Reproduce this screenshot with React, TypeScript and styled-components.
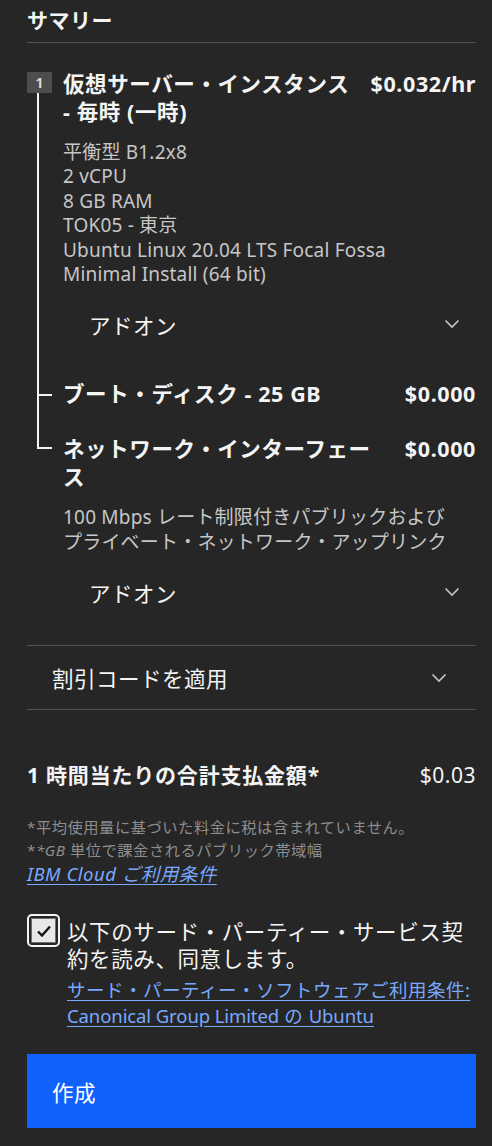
import * as React from 'react'
import styled, { createGlobalStyle } from 'styled-components'

const GlobalStyle = createGlobalStyle`
  html, body {
    margin: 0;
    padding: 0;
    background: #262626;
  }
  body {
    font-family: "Noto Sans", "Noto Sans CJK JP", sans-serif;
    color: #f4f4f4;
    letter-spacing: 0.5px;
  }
`

const Panel = styled.div`
  width: 492px;
  min-height: 1146px;
  box-sizing: border-box;
  padding: 6px 16px 0 27px;
  background: #262626;
`

const Heading = styled.h2`
  margin: 0;
  font-size: 21px;
  font-weight: 700;
  line-height: 28px;
  padding-bottom: 8px;
  border-bottom: 1px solid #525252;
`

const Tree = styled.div`
  margin-top: 27px;
  margin-bottom: 29px;
`

const Item = styled.div`
  display: grid;
  grid-template-columns: 36px 1fr;
`

const Gutter = styled.div`
  display: flex;
  flex-direction: column;
`

const Badge = styled.div`
  width: 25px;
  height: 21px;
  margin-top: 2px;
  background: #4d4d4d;
  color: #e0e0e0;
  font-size: 15px;
  font-weight: 600;
  line-height: 21px;
  text-align: center;
  letter-spacing: 0;
`

const Stem = styled.div`
  flex: 1;
  margin-left: 10px;
  border-left: 2px solid #f4f4f4;
`

// 上: 縦線 (最後の項目は └ の角)
const StemTop = styled.div<{ $corner?: boolean }>`
  height: 14px;
  margin-left: 10px;
  border-left: 2px solid #f4f4f4;
  width: 13px;
  border-bottom: ${(p) => (p.$corner ? '2px solid #f4f4f4' : 'none')};
`

// 下: 枝と続きの縦線
const StemBranch = styled.div<{ $end?: boolean }>`
  flex: 1;
  margin-left: 10px;
  width: 13px;
  border-left: ${(p) => (p.$end ? 'none' : '2px solid #f4f4f4')};
  border-top: ${(p) => (p.$end ? 'none' : '2px solid #f4f4f4')};
`

const Body = styled.div<{ $gap?: number }>`
  padding-top: ${(p) => p.$gap || 0}px;
`

const TitleRow = styled.div`
  display: flex;
  justify-content: space-between;
  gap: 16px;
  font-size: 21.5px;
  font-weight: 700;
  line-height: 28px;
  letter-spacing: 0.6px;
`

const Title = styled.div`
  flex: 1;
`

const Price = styled.div`
  white-space: nowrap;
`

const Details = styled.div`
  margin-top: 14px;
  font-size: 19px;
  line-height: 24.4px;
  letter-spacing: 0.2px;
  color: #c6c6c6;
`

const AddonRow = styled.div`
  display: flex;
  align-items: center;
  justify-content: space-between;
  height: 48px;
  margin-top: 14px;
  padding: 0 16px 0 26px;
  font-size: 21.5px;
`

const Chevron: React.FC = () => (
  <svg width="16" height="10" viewBox="0 0 16 10">
    <path d="M1.5 1.5 L8 8 L14.5 1.5" fill="none" stroke="#c6c6c6" strokeWidth="1.6" />
  </svg>
)

const Discount = styled.div`
  display: flex;
  align-items: center;
  justify-content: space-between;
  height: 63px;
  padding: 0 29px 0 25px;
  border-top: 1px solid #525252;
  border-bottom: 1px solid #525252;
  font-size: 21.5px;
`

const TotalRow = styled.div`
  display: flex;
  justify-content: space-between;
  margin-top: 51px;
  font-size: 21px;
  line-height: 28px;
`

const TotalLabel = styled.div`
  font-weight: 700;
  letter-spacing: 0.8px;
`

const Notes = styled.div`
  margin-top: 27px;
  font-size: 15.3px;
  line-height: 23px;
  color: #8d8d8d;

  em {
    font-style: italic;
  }
`

const Link = styled.a<{ $italic?: boolean }>`
  display: block;
  color: #78a9ff;
  text-decoration: underline;
  text-underline-offset: 3px;
  font-style: ${(p) => (p.$italic ? 'italic' : 'normal')};
  font-size: 18.5px;
  line-height: 24px;
`

const Latin = styled.span`
  letter-spacing: -0.1px;
`

const AgreeRow = styled.div`
  display: flex;
  gap: 7px;
  margin-top: 28px;
`

const CheckFrame = styled.div`
  flex: none;
  width: 33px;
  height: 33px;
  box-sizing: border-box;
  border: 2px solid #f4f4f4;
  border-radius: 5px;
  padding: 2px;
  display: flex;
`

const CheckInner = styled.div`
  flex: 1;
  display: flex;
  align-items: center;
  justify-content: center;
  background: #e8e8e8;
  border: 1px solid #6f6f6f;
`

const AgreeText = styled.div`
  padding-top: 4px;
  font-size: 21.5px;
  line-height: 27px;
  letter-spacing: 0.6px;
`

const AgreeLinks = styled.div`
  margin-top: 5px;

  a {
    line-height: 26px;
  }
`

const CreateButton = styled.button`
  display: flex;
  align-items: center;
  width: 100%;
  height: 74px;
  margin-top: 25px;
  padding: 0 25px;
  border: none;
  background: #0f62fe;
  color: #ffffff;
  font-family: inherit;
  font-size: 21.5px;
  letter-spacing: 0.5px;
  text-align: left;
`

export default function App() {
  return (
    <>
      <GlobalStyle />
      <Panel>
        <Heading>サマリー</Heading>
        <Tree>
          <Item>
            <Gutter>
              <Badge>1</Badge>
              <Stem />
            </Gutter>
            <Body>
              <TitleRow>
                <Title>
                  仮想サーバー・インスタンス
                  <br />- 毎時 (一時)
                </Title>
                <Price>$0.032/hr</Price>
              </TitleRow>
              <Details>
                平衡型 B1.2x8
                <br />2 vCPU
                <br />8 GB RAM
                <br />TOK05 - 東京
                <br />Ubuntu Linux 20.04 LTS Focal Fossa
                <br />Minimal Install (64 bit)
              </Details>
              <AddonRow>
                アドオン
                <Chevron />
              </AddonRow>
            </Body>
          </Item>
          <Item>
            <Gutter>
              <StemTop style={{ height: 46 }} />
              <StemBranch />
            </Gutter>
            <Body $gap={32}>
              <TitleRow>
                <Title>ブート・ディスク - 25 GB</Title>
                <Price>$0.000</Price>
              </TitleRow>
            </Body>
          </Item>
          <Item>
            <Gutter>
              <StemTop $corner style={{ height: 39 }} />
              <StemBranch $end />
            </Gutter>
            <Body $gap={27}>
              <TitleRow>
                <Title>ネットワーク・インターフェース</Title>
                <Price>$0.000</Price>
              </TitleRow>
              <Details>
                100 Mbps レート制限付きパブリックおよび
                <br />
                プライベート・ネットワーク・アップリンク
              </Details>
              <AddonRow>
                アドオン
                <Chevron />
              </AddonRow>
            </Body>
          </Item>
        </Tree>

        <Discount>
          割引コードを適用
          <Chevron />
        </Discount>

        <TotalRow>
          <TotalLabel>1 時間当たりの合計支払金額*</TotalLabel>
          <div>$0.03</div>
        </TotalRow>

        <Notes>
          *平均使用量に基づいた料金に税は含まれていません。
          <br />
          *<em>*GB</em> 単位で課金されるパブリック帯域幅
        </Notes>
        <Link $italic href="#">IBM Cloud ご利用条件</Link>

        <AgreeRow>
          <CheckFrame>
            <CheckInner>
              <svg width="16" height="14" viewBox="0 0 16 14">
                <path d="M2 7.5 L6 11.5 L14 2.5" fill="none" stroke="#161616" strokeWidth="2.4" />
              </svg>
            </CheckInner>
          </CheckFrame>
          <div>
            <AgreeText>以下のサード・パーティー・サービス契約を読み、同意します。</AgreeText>
            <AgreeLinks>
              <Link href="#">
                サード・パーティー・ソフトウェアご利用条件:
                <br />
                <Latin>Canonical Group Limited</Latin> の <Latin>Ubuntu</Latin>
              </Link>
            </AgreeLinks>
          </div>
        </AgreeRow>

        <CreateButton>作成</CreateButton>
      </Panel>
    </>
  )
}
